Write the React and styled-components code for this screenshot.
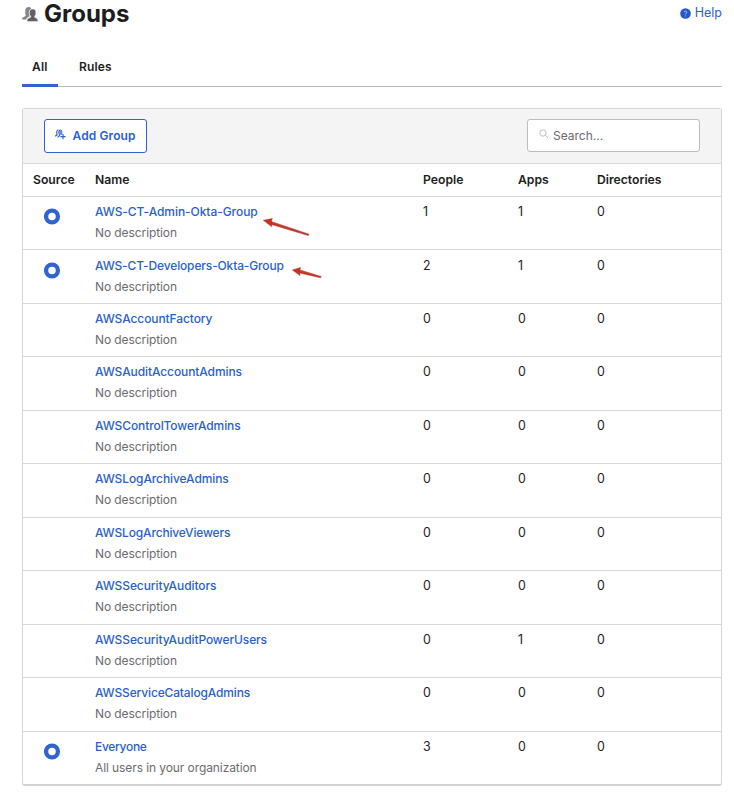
import React from 'react';
import styled, { createGlobalStyle } from 'styled-components';

const Global = createGlobalStyle`
  *, *::before, *::after { box-sizing: border-box; }
  body {
    margin: 0;
    background: #fff;
    color: #1d1d21;
    font: 400 12px/20px Inter, "Liberation Sans", sans-serif;
  }
`;

const Page = styled.main`
  width: 734px;
  height: 795px;
  padding: 0 12px 0 22px;
  overflow: hidden;
`;

const Header = styled.header`
  display: flex;
  justify-content: space-between;
  height: 48px;
`;

const Title = styled.h1`
  display: flex;
  align-items: center;
  gap: 6px;
  height: 28px;
  margin: 0;
  font-size: 24px;
  font-weight: 650;
  letter-spacing: 0;
`;

const HelpLink = styled.a`
  display: flex;
  align-items: center;
  gap: 4px;
  height: 26px;
  color: #2a5fd0;
  font-size: 12.5px;
`;

const Tabs = styled.nav`
  display: flex;
  height: 39px;
  border-bottom: 1px solid #b9b9bc;
`;

const Tab = styled.a`
  height: 39px;
  padding: 9px 10.5px 0 10px;
  margin-right: 11px;
  font-weight: 600;
  letter-spacing: 0.15px;
  border-bottom: 3px solid ${(p) => (p.$active ? '#2f64d6' : 'transparent')};
`;

const Panel = styled.section`
  margin-top: 21px;
  width: 700px;
  border: 1px solid #d5d5d8;
  border-bottom: 2px solid #d2d2d5;
  border-radius: 3px;
`;

const Toolbar = styled.div`
  display: flex;
  justify-content: space-between;
  height: 55px;
  padding: 10px 21px 0;
  background: #f4f4f4;
  border-bottom: 1px solid #d7d7d9;
`;

const AddButton = styled.button`
  display: flex;
  align-items: center;
  gap: 6.5px;
  width: 103px;
  height: 34px;
  padding: 0 0 0 10px;
  background: #fff;
  border: 1px solid #2f63cf;
  border-radius: 3px;
  color: #2a5fd0;
  font: 600 12px/20px Inter, sans-serif;
  letter-spacing: 0.1px;
  white-space: nowrap;
  svg { margin-bottom: 3px; }
`;

const SearchBox = styled.label`
  display: flex;
  align-items: center;
  gap: 4px;
  width: 173px;
  height: 33px;
  padding-left: 11px;
  background: #fff;
  border: 1px solid #bcbcc0;
  border-radius: 3px;
  color: #6a6a70;
  svg { margin-bottom: 3px; }
`;

const Row = styled.div`
  display: grid;
  grid-template-columns: 72px 328px 95px 79px 1fr;
  height: ${(p) => p.$height}px;
  padding-top: ${(p) => p.$shift || 0}px;
  border-bottom: ${(p) => (p.$last ? 0 : 1)}px solid #d7d7d9;
`;

const HeadRow = styled(Row)`
  align-items: center;
  font-size: 12.2px;
  font-weight: 600;
`;

const HeadCell = styled.span`
  padding-left: ${(p) => p.$indent || 0}px;
`;

const Source = styled.div`
  padding: 11px 0 0 21px;
`;

const Ring = styled.svg`
  display: block;
  fill: none;
  stroke: #2f64d2;
  stroke-width: 4.3px;
`;

const Group = styled.div`
  padding-top: 5px;
`;

const NameLine = styled.div`
  display: flex;
  height: 21px;
`;

const GroupLink = styled.a`
  color: #2a5fcb;
  font-weight: 450;
  white-space: nowrap;
  letter-spacing: ${(p) => p.$spacing ?? -0.1}px;
`;

const Description = styled.div`
  color: #6b6b70;
  letter-spacing: -0.09px;
`;

const Count = styled.div`
  padding-top: 5px;
  font-size: 12.4px;
`;

const Pointer = styled.svg`
  flex: none;
  margin: ${(p) => p.$top}px 0 0 ${(p) => p.$left}px;
  overflow: visible;
`;

const PeopleIcon = () => (
  <svg width="16" height="17" viewBox="0 0 16 17">
    <path fill="#85858c" d="M5.4 1.2C7.4.4 9.2 1.2 9.3 2.7 7.3 3.6 6.5 5.3 6.9 7.5l.6 1.7v1L5 12 4.2 13.6H0c.1-2 .8-2.5 3.3-3.4l.5-1.1C3 7.8 3.2 6.8 3.3 5.4 3.2 3 3.9 1.7 5.4 1.2Z" />
    <path fill="#606066" stroke="#fff" strokeWidth=".5" d="M10.5 3.1c2.2-.2 3.5.9 3.3 3.5.3 1.5-.3 2.7-1.1 3.6v1.1c2.4.9 3.3 1.5 3.3 4.3H5c0-2.8.9-3.4 3.7-4.3v-1.1C7.8 9.2 7.2 8 7.5 6.6 7.1 4.3 8.3 3.2 10.5 3.1Z" />
  </svg>
);

const HelpIcon = () => (
  <svg width="11" height="11" viewBox="0 0 11 11">
    <circle cx="5.5" cy="5.5" r="5.3" fill="#2459cb" />
    <path d="M4.1 4.1c.2-1.5 2.9-1.3 2.7.2-.1.9-1.3.9-1.3 2M5.5 7.5v.9" fill="none" stroke="#b8cbf6" strokeWidth=".9" />
  </svg>
);

const AddPeopleIcon = () => (
  <svg width="11" height="11" viewBox="0 0 11 11" fill="none" stroke="#2a5fd0">
    <path d="M.4 7.5c.1-1 .7-1.1 1.7-1.5L2 5.2C1.4 3.8 1.7 1.3 3.2.8M2.8 8.5C3 7.4 3.8 7.2 4.6 6.7V5.8C3.3 3.8 3.8 1 5.3 1S7.4 3.4 6.1 5.6" strokeWidth="1.1" />
    <path d="M4 2h2.6v2L5.5 6 4 4.7Z" fill="#6d91df" stroke="none" />
    <path d="M8 5v5.2M5.4 7.6h5.2" strokeWidth="1.1" />
  </svg>
);

const SearchIcon = () => (
  <svg width="10" height="10" viewBox="0 0 10 10" fill="none" stroke="#bfbfc3">
    <circle cx="4" cy="4" r="3.2" />
    <path d="m6.3 6.3 2.7 2.7" />
  </svg>
);

const OktaRing = () => (
  <Ring width="17" height="17" viewBox="0 0 17 17">
    <circle cx="8" cy="8.5" r="5.9" />
  </Ring>
);

const LongPointer = () => (
  <Pointer $left={5} $top={16} width="47" height="20" viewBox="0 0 47 20">
    <path d="M8 3.4 46 16.2 45.3 17.6 7.5 6.2Z" fill="#c8372a" stroke="#983529" strokeWidth=".5" />
    <path d="M.4 2.3 9.3.6 8.2 4.3 8.8 8.8Z" fill="#d22d20" stroke="#a33226" strokeWidth=".5" />
  </Pointer>
);

const ShortPointer = () => (
  <Pointer $left={8} $top={11} width="30" height="14" viewBox="0 0 30 14">
    <path d="M7 2.7 29.2 9.5 28.6 10.8 6.5 5.8Z" fill="#c8372a" stroke="#983529" strokeWidth=".5" />
    <path d="M.4 3 8.6.6 7.4 4.1 8 8.6Z" fill="#d22d20" stroke="#a33226" strokeWidth=".5" />
  </Pointer>
);

const groups = [
  { name: 'AWS-CT-Admin-Okta-Group', people: 1, apps: 1, okta: true, spacing: -0.06, pointer: <LongPointer /> },
  { name: 'AWS-CT-Developers-Okta-Group', people: 2, apps: 1, okta: true, shift: 1, spacing: -0.14, pointer: <ShortPointer /> },
  { name: 'AWSAccountFactory', people: 0, apps: 0 },
  { name: 'AWSAuditAccountAdmins', people: 0, apps: 0 },
  { name: 'AWSControlTowerAdmins', people: 0, apps: 0 },
  { name: 'AWSLogArchiveAdmins', people: 0, apps: 0 },
  { name: 'AWSLogArchiveViewers', people: 0, apps: 0, spacing: -0.16 },
  { name: 'AWSSecurityAuditors', people: 0, apps: 0 },
  { name: 'AWSSecurityAuditPowerUsers', people: 0, apps: 1 },
  { name: 'AWSServiceCatalogAdmins', people: 0, apps: 0, spacing: -0.15 },
  { name: 'Everyone', people: 3, apps: 0, okta: true, spacing: -0.3, description: 'All users in your organization' },
];

export default function App() {
  return (
    <Page>
      <Global />
      <Header>
        <Title><PeopleIcon />Groups</Title>
        <HelpLink><HelpIcon />Help</HelpLink>
      </Header>
      <Tabs>
        <Tab $active>All</Tab>
        <Tab>Rules</Tab>
      </Tabs>
      <Panel>
        <Toolbar>
          <AddButton><AddPeopleIcon />Add Group</AddButton>
          <SearchBox><SearchIcon />Search...</SearchBox>
        </Toolbar>
        <HeadRow $height={33}>
          <HeadCell $indent={10}>Source</HeadCell>
          <HeadCell>Name</HeadCell>
          <HeadCell>People</HeadCell>
          <HeadCell>Apps</HeadCell>
          <HeadCell>Directories</HeadCell>
        </HeadRow>
        {groups.map((group, i) => (
          <Row
            key={group.name}
            $height={i === groups.length - 1 ? 52 : i % 2 ? 54 : 53}
            $last={i === groups.length - 1}
            $shift={group.shift}
          >
            <Source>{group.okta && <OktaRing />}</Source>
            <Group>
              <NameLine>
                <GroupLink $spacing={group.spacing}>{group.name}</GroupLink>
                {group.pointer}
              </NameLine>
              <Description>{group.description || 'No description'}</Description>
            </Group>
            <Count>{group.people}</Count>
            <Count>{group.apps}</Count>
            <Count>0</Count>
          </Row>
        ))}
      </Panel>
    </Page>
  );
}
